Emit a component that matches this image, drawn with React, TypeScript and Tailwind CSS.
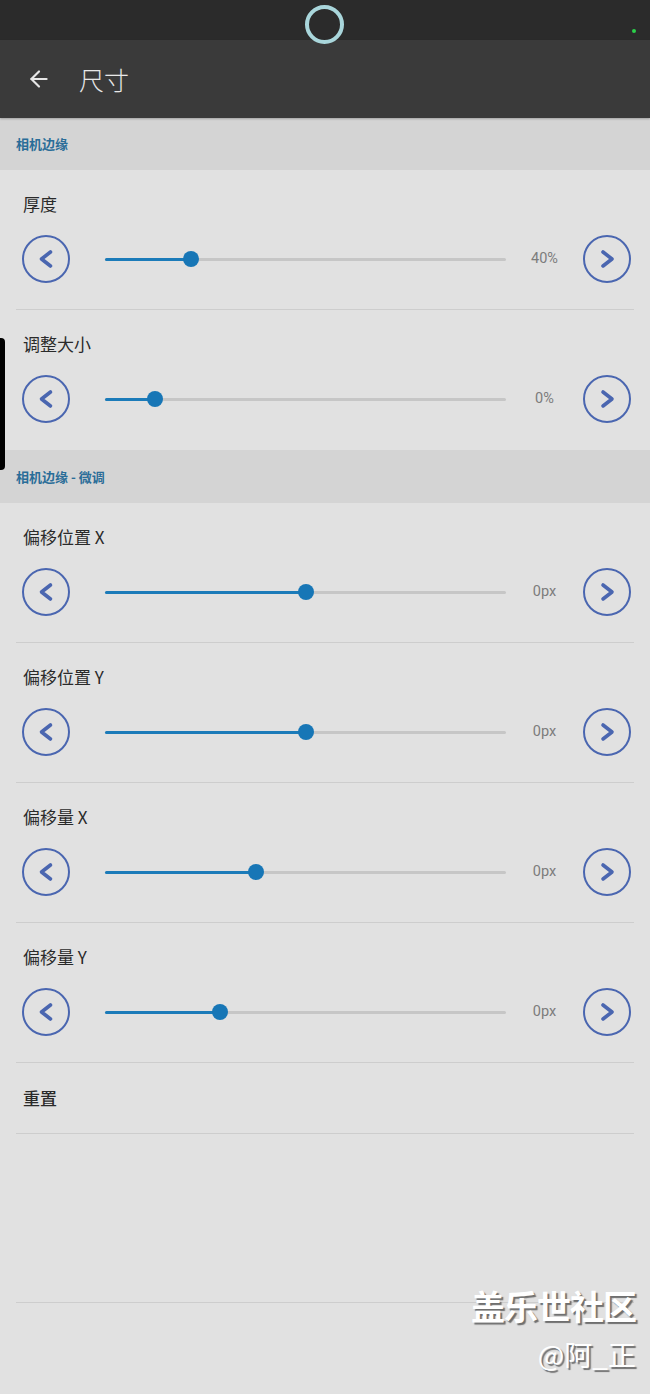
import React from "react";

const FONT = { fontFamily: '"Noto Sans CJK SC", "Noto Sans", Roboto, sans-serif' };

function CircleBtn({ dir }: { dir: "left" | "right" }) {
  return (
    <div className="w-[48px] h-[48px] shrink-0 rounded-full border-2 border-[#4a66b0] flex items-center justify-center">
      <svg width="48" height="48" viewBox="0 0 48 48" className="-m-[2px]">
        {dir === "left" ? (
          <path d="M28.5 17 L19.5 24 L28.5 31" fill="none" stroke="#4a66b0" strokeWidth="3.6" strokeLinecap="round" strokeLinejoin="round" />
        ) : (
          <path d="M20 17 L29 24 L20 31" fill="none" stroke="#4a66b0" strokeWidth="3.6" strokeLinecap="round" strokeLinejoin="round" />
        )}
      </svg>
    </div>
  );
}

function SliderRow({ label, frac, value, divider }: { label: string; frac: number; value: string; divider: boolean }) {
  return (
    <div className="flex flex-col">
      <div className="pt-[22px] pl-[23px] text-[17px] leading-[24px] text-[#2a2a2a]">{label}</div>
      <div className="mt-[19px] h-[48px] flex items-center pl-[22px] pr-[19px]">
        <CircleBtn dir="left" />
        <div className="ml-[35px] flex-1 relative h-[16px] flex items-center">
          <div className="w-full h-[3px] bg-[#c6c6c6] rounded-full" />
          <div className="absolute left-0 h-[3px] bg-[#1b7bb9] rounded-full" style={{ width: `${frac * 100}%` }} />
          <div
            className="absolute w-[16px] h-[16px] rounded-full bg-[#1776b6] -ml-[8px]"
            style={{ left: `${frac * 100}%` }}
          />
        </div>
        <div className="w-[77px] shrink-0 text-center text-[14.5px] text-[#7c7c7c]" style={{ fontFamily: 'Roboto, "Noto Sans", sans-serif' }}>
          {value}
        </div>
        <CircleBtn dir="right" />
      </div>
      <div className="mt-[26px] mx-4 h-px" style={{ backgroundColor: divider ? "#cdcdcd" : "transparent" }} />
    </div>
  );
}

function SectionHeader({ title, h }: { title: string; h: string }) {
  return (
    <div className={`${h} bg-[#d4d4d4] flex items-center px-4`}>
      <span className="text-[13px] font-bold text-[#2a6d98]">{title}</span>
    </div>
  );
}

export default function App() {
  return (
    <div className="relative w-full h-[1394px] overflow-hidden bg-[#e1e1e1]" style={FONT}>
      <div className="h-[40px] bg-[#2b2b2b] relative">
        <div className="absolute left-[632px] top-[29px] w-[4px] h-[4px] rounded-full bg-[#2bd04a]" />
      </div>
      <div className="h-[78px] bg-[#3a3a3a] flex items-center pl-[26px] shadow-[0_1px_2px_rgba(0,0,0,0.25)] relative">
        <svg width="26" height="26" viewBox="0 0 24 24" fill="none" stroke="#e6e6e6" strokeWidth="2" strokeLinecap="round" strokeLinejoin="round">
          <path d="M19 12H5" />
          <path d="M12 19l-7-7 7-7" />
        </svg>
        <span className="ml-[27px] text-[25px] font-light text-[#e8e8e8] leading-none">尺寸</span>
      </div>

      <div className="absolute left-[305px] top-[5px] w-[39px] h-[39px] rounded-full border-[4px] border-[#a9d6db]" />

      <SectionHeader title="相机边缘" h="h-[52px]" />
      <SliderRow label="厚度" frac={0.214} value="40%" divider />
      <SliderRow label="调整大小" frac={0.125} value="0%" divider={false} />
      <SectionHeader title="相机边缘 - 微调" h="h-[53px]" />
      <SliderRow label="偏移位置 X" frac={0.501} value="0px" divider />
      <SliderRow label="偏移位置 Y" frac={0.501} value="0px" divider />
      <SliderRow label="偏移量 X" frac={0.377} value="0px" divider />
      <SliderRow label="偏移量 Y" frac={0.287} value="0px" divider />

      <div className="h-[70px] flex items-center pl-[23px]">
        <span className="text-[17px] font-medium text-[#2a2a2a]">重置</span>
      </div>
      <div className="mx-4 h-px bg-[#cdcdcd]" />
      <div className="h-[168px]" />
      <div className="mx-4 h-px bg-[#cdcdcd]" />

      <div className="absolute left-0 top-[338px] w-[5px] h-[132px] bg-black rounded-r-[4px]" />

      <div className="absolute right-[14px] top-[1284px] flex flex-col items-end text-white" style={{ textShadow: "2px 2px 1px #6f6f6f" }}>
        <span className="text-[34px] font-bold leading-[44px] tracking-[-1px]">盖乐世社区</span>
        <span className="text-[28px] leading-[40px] mt-[6px]">@阿_正</span>
      </div>
    </div>
  );
}
